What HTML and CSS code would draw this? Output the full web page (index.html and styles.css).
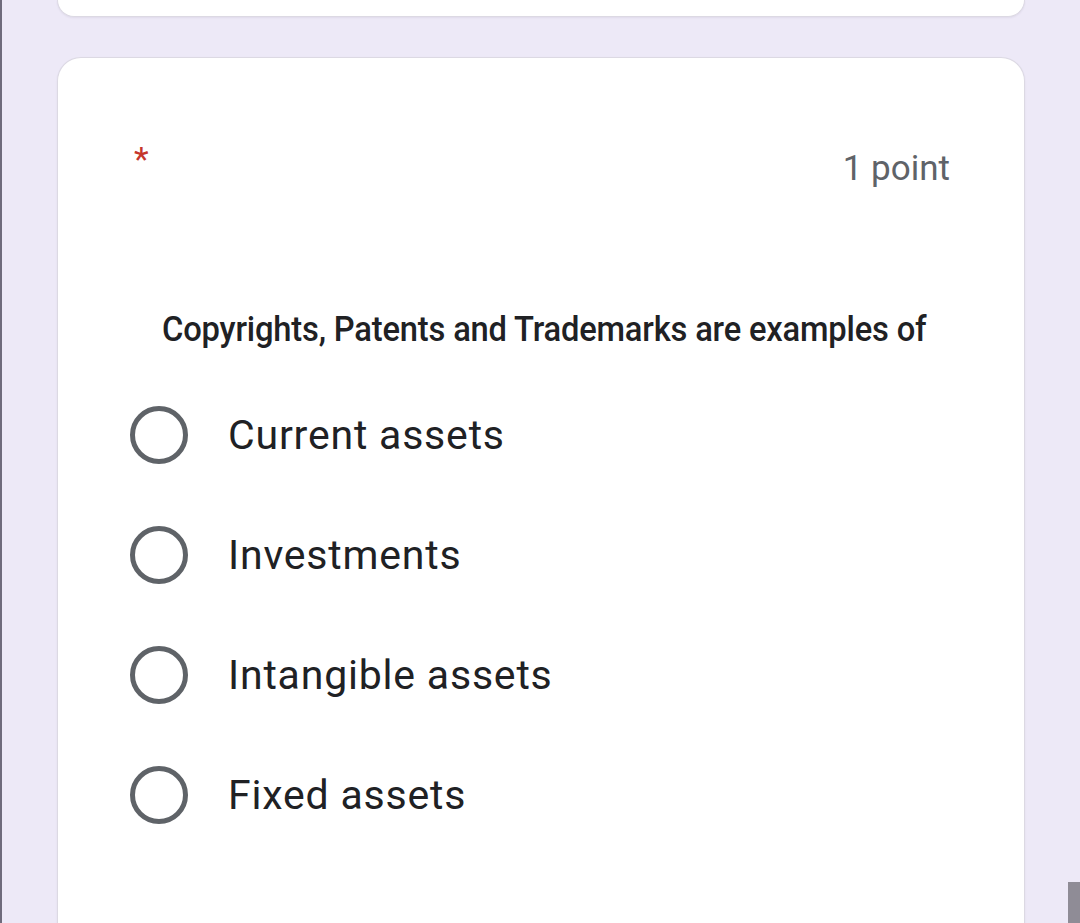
FILE: index.html
```html
<!DOCTYPE html>
<html>
<head>
<meta charset="utf-8">
<link rel="stylesheet" href="styles.css">
</head>
<body>
<div class="page">
  <div class="card card-top"></div>
  <div class="card card-main">
    <div class="header">
      <span class="required">*</span>
      <span class="points">1 point</span>
    </div>
    <div class="question"><span class="question-text">Copyrights, Patents and Trademarks are examples of</span></div>
    <div class="options">
      <label class="option"><span class="radio"></span><span class="opt-text">Current assets</span></label>
      <label class="option"><span class="radio"></span><span class="opt-text">Investments</span></label>
      <label class="option"><span class="radio"></span><span class="opt-text">Intangible assets</span></label>
      <label class="option"><span class="radio"></span><span class="opt-text">Fixed assets</span></label>
    </div>
  </div>
  <div class="scrollbar"></div>
</div>
</body>
</html>
```
FILE: styles.css
```css
html, body {
  margin: 0;
  padding: 0;
}
body {
  font-family: Roboto, "Liberation Sans", sans-serif;
}
.page {
  position: relative;
  box-sizing: border-box;
  width: 1080px;
  height: 923px;
  overflow: hidden;
  background: #ede9f7;
  border-left: 2px solid #6f6b7c;
  padding: 0 55px 0 55px;
  display: flex;
  flex-direction: column;
  gap: 40px;
}
.card {
  background: #fff;
  border: 1px solid #dcd9e3;
  border-radius: 24px;
  box-shadow: 0 1px 2px rgba(60, 50, 90, 0.08);
}
.card-top {
  height: 17px;
  flex: none;
  border-top: none;
  border-radius: 0 0 22px 22px;
  box-sizing: border-box;
}
.card-main {
  flex: 1;
  border-bottom: none;
  border-radius: 24px 24px 0 0;
  padding: 84px 74px 0 72px;
}
.header {
  display: flex;
  justify-content: space-between;
  align-items: flex-start;
}
.required {
  color: #c5362b;
  font-size: 34px;
  line-height: 30px;
  margin-left: 4px;
  margin-top: 2px;
}
.points {
  color: #5f6368;
  font-size: 35px;
  line-height: 34px;
  margin-top: 10px;
}
.question {
  margin-top: 124px;
  margin-left: 32px;
  line-height: 40px;
  height: 40px;
}
.question-text {
  display: inline-block;
  font-size: 35px;
  font-weight: 500;
  color: #202124;
  letter-spacing: -0.2px;
  transform: scaleX(0.935);
  transform-origin: left center;
  white-space: nowrap;
}
.options {
  display: flex;
  flex-direction: column;
  gap: 62px;
  margin-top: 56px;
}
.option {
  display: flex;
  align-items: center;
  gap: 40px;
  height: 58px;
}
.radio {
  box-sizing: border-box;
  width: 58px;
  height: 58px;
  border: 5px solid #5f6368;
  border-radius: 50%;
  flex: none;
}
.opt-text {
  font-size: 41px;
  letter-spacing: 0.8px;
  color: #202124;
}
.scrollbar {
  position: absolute;
  right: 0;
  bottom: 0;
  width: 12px;
  height: 41px;
  background: #8f8c96;
}
```
